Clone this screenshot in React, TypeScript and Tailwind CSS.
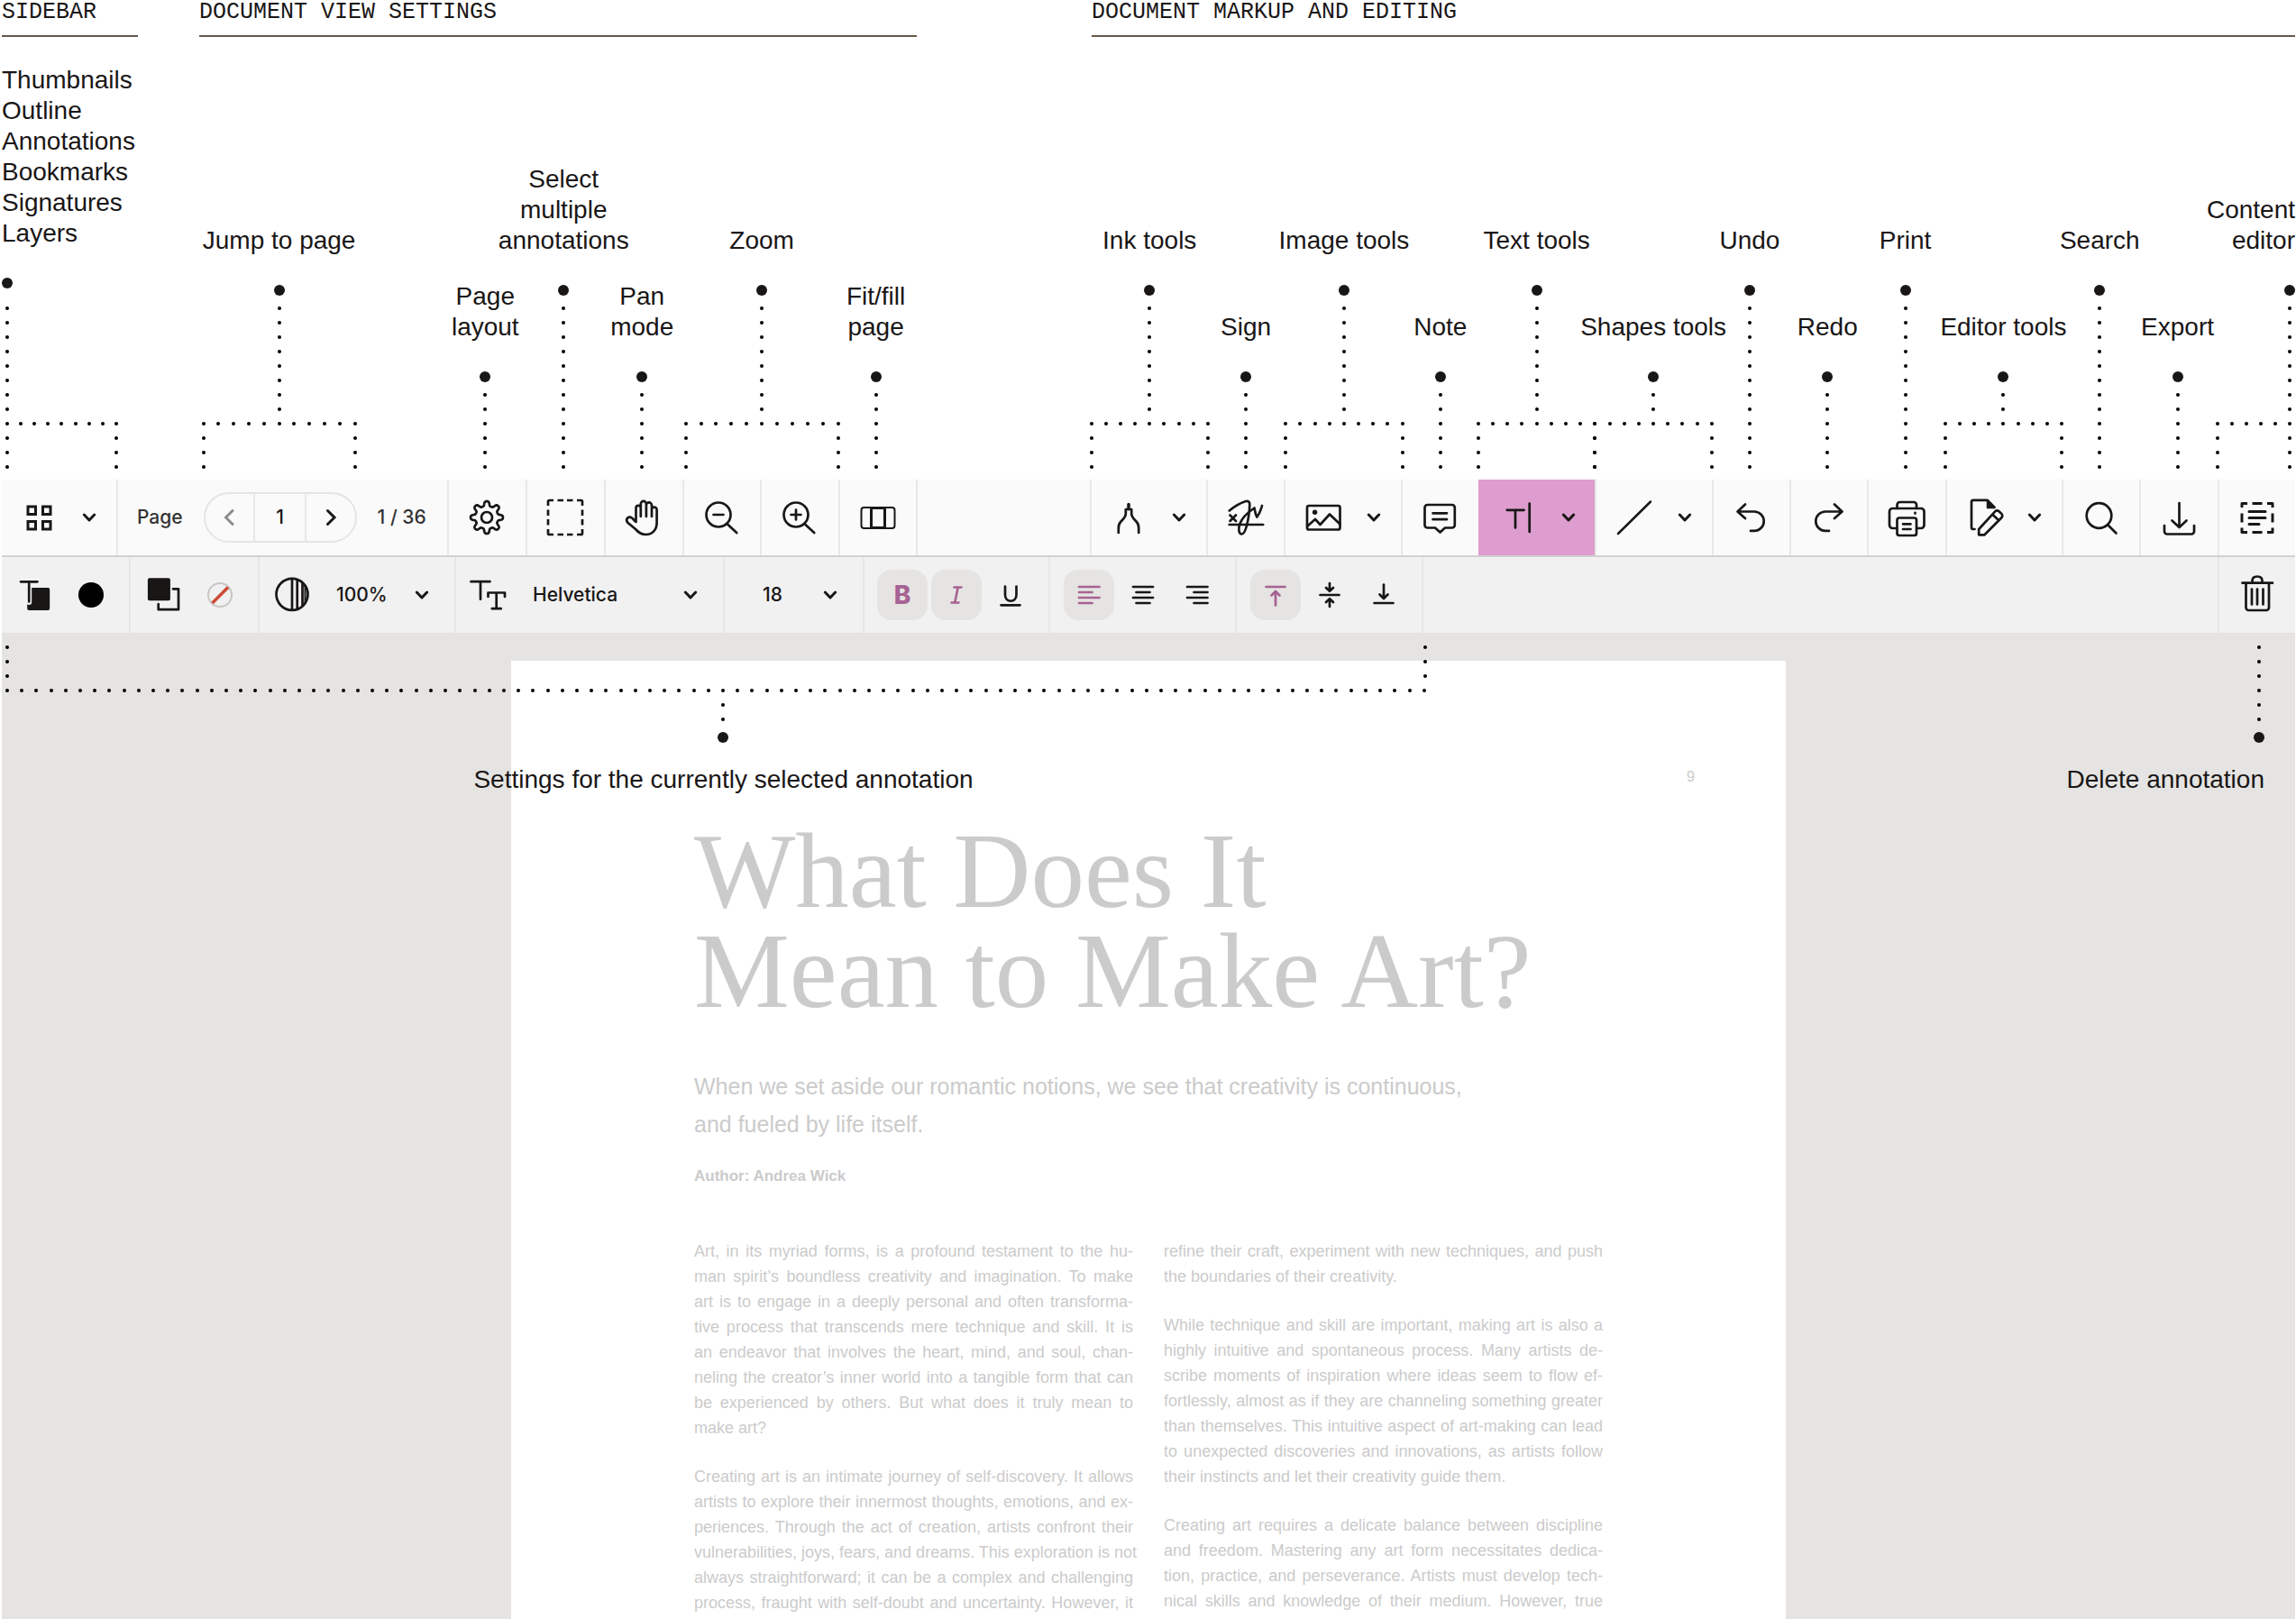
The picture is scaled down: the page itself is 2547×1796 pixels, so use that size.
import React from "react";

const ink = "#191616";

/* ---------- callouts ---------- */

function Dots({ count }: { count: number }) {
  return (
    <div className="flex w-3 flex-col items-center gap-3">
      {Array.from({ length: count }, (_, i) => (
        <span key={i} className="size-1 shrink-0 rounded-full bg-black" />
      ))}
    </div>
  );
}

function DotRow({ count }: { count: number }) {
  return (
    <div className="flex w-full justify-between">
      {Array.from({ length: count }, (_, i) => (
        <span key={i} className="size-1 shrink-0 rounded-full bg-black" />
      ))}
    </div>
  );
}

function Legs() {
  return (
    <div className="-mx-1 flex justify-between self-stretch">
      <Dots count={3} />
      <Dots count={3} />
    </div>
  );
}

const BigDot = () => <span className="size-3 shrink-0 rounded-full bg-[#191616]" />;

const labelText = "whitespace-nowrap text-[28px] leading-[34px] text-[#191616]";

type CalloutProps = {
  lines: string[];
  dots: number;
  bracket?: number;
  place?: string;
  align?: "start" | "center" | "end";
};

function Callout({ lines, dots, bracket, place = "-left-1 right-0", align = "center" }: CalloutProps) {
  const items = align === "start" ? "items-start" : align === "end" ? "items-end" : "items-center";
  const text = align === "start" ? "text-left" : align === "end" ? "text-right" : "text-center";
  return (
    <div className={`pointer-events-none absolute bottom-full flex flex-col gap-3 pb-3 ${items} ${place}`}>
      <div className={`mb-5 ${labelText} ${text}`}>
        {lines.map((line) => (
          <div key={line}>{line}</div>
        ))}
      </div>
      <BigDot />
      <Dots count={dots} />
      {bracket ? (
        <>
          <DotRow count={bracket} />
          <Legs />
        </>
      ) : null}
    </div>
  );
}

/* ---------- icons ---------- */

function Icon({ children, box = 48, width = 2.7 }: { children: React.ReactNode; box?: number; width?: number }) {
  return (
    <svg
      width={box}
      height={box}
      viewBox={`0 0 ${box} ${box}`}
      fill="none"
      stroke="currentColor"
      strokeWidth={width}
      strokeLinecap="round"
      strokeLinejoin="round"
      className="shrink-0"
      aria-hidden="true"
    >
      {children}
    </svg>
  );
}

const Chevron = () => (
  <svg width="24" height="24" viewBox="0 0 24 24" fill="none" stroke={ink} strokeWidth="3" strokeLinecap="round" strokeLinejoin="round" className="pointer-events-none shrink-0" aria-hidden="true">
    <path d="M6.300 9l5.700 6 5.700-6" />
  </svg>
);

const gearPath =
  Array.from({ length: 240 }, (_, i) => {
    const a = (i / 240) * Math.PI * 2;
    const r = 15.4 + 2.7 * Math.tanh(1.9 * Math.cos(8 * a) - 0.2);
    return `${i ? "L" : "M"}${(24 + r * Math.cos(a)).toFixed(2)} ${(24 + r * Math.sin(a)).toFixed(2)}`;
  }).join("") + "z";

const icons = {
  grid: (
    <Icon width={3}>
      <path strokeLinejoin="miter" d="M12 12h8.500v8.500h-8.500zM28.500 12h8.500v8.500h-8.500zM12 28.500h8.500v8.500h-8.500zM28.500 28.500h8.500v8.500h-8.500z" />
    </Icon>
  ),
  gear: (
    <Icon>
      <path d={gearPath} />
      <circle cx="24" cy="24" r="6" />
    </Icon>
  ),
  select: (
    <Icon width={2.7}>
      <g strokeLinecap="butt">
        <path d="M5 11V6.500A1.500 1.500 0 0 1 6.500 5H11M37 5h4.500A1.500 1.500 0 0 1 43 6.500V11M43 37v4.500a1.500 1.500 0 0 1-1.500 1.500H37M11 43H6.500A1.500 1.500 0 0 1 5 41.500V37" />
        <path d="M15.500 5H22M26 5h6.500M15.500 43H22M26 43h6.500M5 15.500V22M5 26v6.500M43 15.500V22M43 26v6.500" />
      </g>
    </Icon>
  ),
  hand: (
    <Icon>
      <path d="M15.500 29V13.500a2.650 2.650 0 0 1 5.300 0V23M20.800 14V9a3.050 3.050 0 0 1 6.100 0v14M26.900 10.500a3.050 3.050 0 0 1 6.100 0V23M33 15.500a2.800 2.800 0 0 1 5.600 0V30c0 7.500-5 13-12.100 13-5.500 0-8.500-2.500-11.500-6L6 29.500c-2.500-4 1.500-7.500 5-5l4.500 4.500" />
    </Icon>
  ),
  zoomOut: (
    <Icon>
      <circle cx="20" cy="21" r="13.500" />
      <path d="M30.500 32l9.700 9M14.500 21h11" />
    </Icon>
  ),
  zoomIn: (
    <Icon>
      <circle cx="20" cy="21" r="13.500" />
      <path d="M30.500 32l9.700 9M14.500 21h11M20 15.500v11" />
    </Icon>
  ),
  fit: (
    <Icon width={2}>
      <rect x="5.500" y="13" width="37" height="23" rx="3" />
      <path strokeWidth="3" strokeLinejoin="miter" d="M16.500 13.500h15v22h-15z" />
    </Icon>
  ),
  marker: (
    <Icon>
      <path d="M12.800 41v-5.500c0-3 .8-5 2.700-7 3-3.200 5.300-5 5.300-8.500v-5h6.400v5c0 3.500 2.300 5.300 5.300 8.500 1.900 2 2.700 4 2.700 7V41" />
      <path strokeWidth="3.500" d="M24 9.500v5" />
    </Icon>
  ),
  sign: (
    <Icon>
      <path d="M5.700 32h37.500M6.500 21.500l6.500 6.500M13 21.500L6.500 28" />
      <path d="M5.700 16.500C11 12 18 8 24 6c3.500-.8 4.500 1.500 4.300 4.500-.4 8-.8 13.500-3.300 22.500-1.500 6-3 9.500-5.500 9.500-3.500 0-3.800-6-2.300-11C20 23.500 26 18.500 33.500 13.500c.8 3.500 1 7 2.800 10 2.700-3.500 4.500-8 5.700-12.500" />
    </Icon>
  ),
  image: (
    <Icon>
      <rect x="6" y="11" width="36.500" height="26.500" rx="2" />
      <circle cx="14.600" cy="18.300" r="2.700" fill="currentColor" stroke="none" />
      <path d="M6.500 33.500l8.500-7.500 5.500 6L31 20.500l11.500 11" />
    </Icon>
  ),
  note: (
    <Icon>
      <path d="M9.500 10h27.300a3 3 0 0 1 3 3v19.500a3 3 0 0 1-3 3H29l-5.500 5-5.500-5h-8.500a3 3 0 0 1-3-3V13a3 3 0 0 1 3-3zM15.500 19.300h15.500M15.500 26.200h15.500" />
    </Icon>
  ),
  text: (
    <Icon>
      <path d="M11.800 15.800h18.800M21 15.800V35.500M36.700 8.500V40" />
    </Icon>
  ),
  line: (
    <Icon width={2.5}>
      <path d="M6 42L42 6.500" />
    </Icon>
  ),
  undo: (
    <Icon>
      <path d="M17 9.500L8.500 17.500l8.500 7.500M9 17.500H27a10.700 10.700 0 0 1 0 21.400h-4" />
    </Icon>
  ),
  redo: (
    <Icon>
      <path d="M30 9.500L38.500 17.500 30 25M38 17.500H20a10.700 10.700 0 0 0 0 21.400h4" />
    </Icon>
  ),
  print: (
    <Icon>
      <path d="M12.500 14V10a3 3 0 0 1 3-3H31a3 3 0 0 1 3 3v4" />
      <path d="M12 36H7.500a3.500 3.500 0 0 1-3.500-3.500v-15A3.500 3.500 0 0 1 7.500 14h31.500a3.500 3.500 0 0 1 3.500 3.500v15A3.500 3.500 0 0 1 39 36h-4.500" />
      <rect x="12.500" y="24.500" width="21.500" height="19.500" rx="2.500" />
      <path d="M19 31.300h8.500M19 37h8.500M32.500 18.800v.8" />
    </Icon>
  ),
  editor: (
    <Icon>
      <path d="M13.500 37h-1.500a2 2 0 0 1-2-2V6.800a2 2 0 0 1 2-2H27.500l8 8" />
      <path fill="currentColor" strokeWidth="1.500" d="M27.500 5v8.500h8z" />
      <path d="M18.200 43.300V37L36.200 17.300a3 3 0 0 1 4.300-.1l2.800 2.700a3 3 0 0 1 .1 4.300L24.500 43.300zM33.300 20.700l7 6.500" />
    </Icon>
  ),
  search: (
    <Icon>
      <circle cx="21.500" cy="22" r="13.800" />
      <path d="M31.500 32.500l9 9" />
    </Icon>
  ),
  download: (
    <Icon>
      <path d="M23.500 8v26.500M15.500 27.500l8 7.500 8-7.500M7 33v6.500a3 3 0 0 0 3 3h27a3 3 0 0 0 3-3V33" />
    </Icon>
  ),
  content: (
    <Icon width={3}>
      <g strokeLinecap="butt">
        <path d="M7 13V8.500h6M35 8.500h6V13M41 35.500V40.500h-6M13 40.500H7v-5M18.500 8.500h11M18.500 40.500h11M7 19.500v10M41 19.500v10" />
      </g>
      <path d="M15 17.500h18M15 24.500h18M15 31.500h11" />
    </Icon>
  ),
  textColor: (
    <Icon>
      <rect x="16.200" y="16" width="25" height="25" rx="2" fill="currentColor" stroke="none" />
      <path stroke="#f1f1f1" strokeWidth="6" strokeLinecap="round" d="M18.200 16v16" />
      <path d="M9 9.300h18.500M18.200 9.300V31.500" />
    </Icon>
  ),
  fillColor: (
    <Icon>
      <rect x="6.900" y="5.300" width="25" height="25" rx="2" fill="currentColor" stroke="none" />
      <path d="M35 17.300h6V40.200H18.700V34" />
    </Icon>
  ),
  opacity: (
    <Icon>
      <circle cx="24" cy="23.300" r="17.500" />
      <path d="M24 6v34.500M29.700 7.500v31.500M35.500 11.500v23.500" />
      <path strokeWidth="2" d="M38.500 14.500v17.500" />
    </Icon>
  ),
  fontSize: (
    <Icon>
      <path d="M4.500 9.200h21M15 9.200v19.500M23.500 26v-4.500h18.500v4.500M32.700 21.500v17.500M27.800 39.200h10" />
    </Icon>
  ),
  trash: (
    <Icon>
      <path d="M7.500 10.700h33.500M18.500 10V8.500c0-3 2-5 5.500-5s5.500 2 5.500 5V10M11.500 11v27a3 3 0 0 0 3 3h19.500a3 3 0 0 0 3-3V11M18 17.500v17M24 17.500v17M30.500 17.500v17" />
    </Icon>
  ),
  italic: (
    <Icon box={32} width={2.6}>
      <path d="M13.500 7.500h8M10.500 24.500h8M17.700 7.500l-3.500 17" />
    </Icon>
  ),
  underline: (
    <Icon box={32}>
      <path d="M10 6.500v9.500c0 9 12.500 9 12.500 0V6.500M5.500 27.300h21" />
    </Icon>
  ),
  alignLeft: (
    <Icon box={32}>
      <path d="M5 7h22.500M5 13h14.500M5 19h22.500M5 25h14.500" />
    </Icon>
  ),
  alignCenter: (
    <Icon box={32}>
      <path d="M5 7h22M8.500 13h15M5 19h22M8.500 25h15" />
    </Icon>
  ),
  alignRight: (
    <Icon box={32}>
      <path d="M5 7h22.500M12.500 13h15M5 19h22.500M12.500 25h15" />
    </Icon>
  ),
  top: (
    <Icon box={32}>
      <path d="M5.500 7h21M16 27.500V12M11.500 16.500L16 12l4.500 4.500" />
    </Icon>
  ),
  middle: (
    <Icon box={32}>
      <path d="M5.500 16h21M16 3v8M12 8l4 3.800L20 8M16 29v-8M12 24l4-3.800 4 3.800" />
    </Icon>
  ),
  bottom: (
    <Icon box={32}>
      <path d="M5.500 25h21M16 4.500V20M11.500 15.500L16 20l4.500-4.500" />
    </Icon>
  ),
};

/* ---------- main toolbar ---------- */

type ToolProps = {
  label: string;
  icon: React.ReactNode;
  menu?: boolean;
  active?: boolean;
  first?: boolean;
  children?: React.ReactNode;
};

function Tool({ label, icon, menu, active, first, children }: ToolProps) {
  const tone = active ? "border-[#dd9dce] bg-[#dd9dce]" : "border-[#e8e8e8]";
  return (
    <div className={`relative flex min-w-0 ${first ? "" : "border-l-2"} ${tone}`}>
      {children}
      <button type="button" aria-label={label} className="flex flex-1 items-center justify-center gap-5">
        {icon}
        {menu && <Chevron />}
      </button>
    </div>
  );
}

const wide = "-left-0.5 -right-1";
const snug = "-left-1 -right-0.5";

function PageNavigator() {
  return (
    <div className="flex items-center gap-[23px] border-l-2 border-[#e8e8e8] pl-[21px] text-[21px] font-medium text-[#333]">
      <label htmlFor="page">Page</label>
      <div className="relative">
        <Callout lines={["Jump to page"]} dots={8} bracket={11} place="-left-0.5 right-0 mb-[14px]" />
        <div className="flex h-14 w-[170px] divide-x-2 divide-[#e8e8e8] overflow-hidden rounded-full border-2 border-[#e5e5e5]">
          <button type="button" aria-label="Previous page" className="flex flex-1 items-center justify-center text-[#8b8b8b]">
            <svg width="24" height="24" viewBox="0 0 24 24" fill="none" stroke="currentColor" strokeWidth="3" strokeLinecap="round" aria-hidden="true">
              <path d="M16 4.500L8.500 12l7.500 7.500" />
            </svg>
          </button>
          <input id="page" defaultValue="1" className="w-[57px] bg-transparent text-center text-[#191616] outline-none" />
          <button type="button" aria-label="Next page" className="flex flex-1 items-center justify-center text-[#191616]">
            <svg width="24" height="24" viewBox="0 0 24 24" fill="none" stroke="currentColor" strokeWidth="3" strokeLinecap="round" aria-hidden="true">
              <path d="M8.500 4.500L16 12l-7.500 7.500" />
            </svg>
          </button>
        </div>
      </div>
      <span className="whitespace-nowrap">1 / 36</span>
    </div>
  );
}

function MainToolbar() {
  return (
    <div role="toolbar" aria-label="Document tools" className="grid h-[86px] grid-cols-[1014fr_193fr_1338fr] border-b-2 border-[#d2d2d1] bg-[#fafafa] text-[#191616]">
      <div className="grid grid-cols-[127fr_367fr_87fr_87fr_87fr_173fr_86fr]">
        <Tool label="Sidebar" icon={icons.grid} menu first>
          <Callout
            lines={["Thumbnails", "Outline", "Annotations", "Bookmarks", "Signatures", "Layers"]}
            dots={0}
            align="start"
            place="left-0 mb-[188px]"
          />
          <div className="pointer-events-none absolute bottom-full left-0 -right-1 flex flex-col gap-3 pb-3 pr-0.5">
            <Dots count={8} />
            <div className="pl-1">
              <DotRow count={9} />
            </div>
            <div className="-mr-1 flex justify-between">
              <Dots count={3} />
              <Dots count={3} />
            </div>
          </div>
        </Tool>
        <PageNavigator />
        <Tool label="Page layout" icon={icons.gear}>
          <Callout lines={["Page", "layout"]} dots={6} />
        </Tool>
        <Tool label="Select multiple annotations" icon={icons.select}>
          <Callout lines={["Select", "multiple", "annotations"]} dots={12} />
        </Tool>
        <Tool label="Pan mode" icon={icons.hand}>
          <Callout lines={["Pan", "mode"]} dots={6} />
        </Tool>
        <div className="relative grid grid-cols-2">
          <Callout lines={["Zoom"]} dots={8} bracket={11} place="left-0.5 -right-0.5" />
          <Tool label="Zoom out" icon={icons.zoomOut} />
          <Tool label="Zoom in" icon={icons.zoomIn} />
        </div>
        <Tool label="Fit or fill page" icon={icons.fit}>
          <Callout lines={["Fit/fill", "page"]} dots={6} />
        </Tool>
      </div>
      <div className="border-l-2 border-[#e8e8e8]" />
      <div className="grid grid-cols-[3fr_2fr_3fr_2fr_3fr_3fr_2fr_2fr_2fr_3fr_2fr_2fr_2fr]">
        <Tool label="Ink tools" icon={icons.marker} menu>
          <Callout lines={["Ink tools"]} dots={8} bracket={9} place={wide} />
        </Tool>
        <Tool label="Sign" icon={icons.sign}>
          <Callout lines={["Sign"]} dots={6} place="inset-x-0" />
        </Tool>
        <Tool label="Image tools" icon={icons.image} menu>
          <Callout lines={["Image tools"]} dots={8} bracket={9} place={wide} />
        </Tool>
        <Tool label="Note" icon={icons.note}>
          <Callout lines={["Note"]} dots={6} place="inset-x-0" />
        </Tool>
        <Tool label="Text tools" icon={icons.text} menu active>
          <Callout lines={["Text tools"]} dots={8} bracket={9} place={snug} />
        </Tool>
        <Tool label="Shapes tools" icon={icons.line} menu>
          <Callout lines={["Shapes tools"]} dots={2} bracket={9} place={snug} />
        </Tool>
        <Tool label="Undo" icon={icons.undo}>
          <Callout lines={["Undo"]} dots={12} />
        </Tool>
        <Tool label="Redo" icon={icons.redo}>
          <Callout lines={["Redo"]} dots={6} />
        </Tool>
        <Tool label="Print" icon={icons.print}>
          <Callout lines={["Print"]} dots={12} />
        </Tool>
        <Tool label="Editor tools" icon={icons.editor} menu>
          <Callout lines={["Editor tools"]} dots={2} bracket={9} place={snug} />
        </Tool>
        <Tool label="Search" icon={icons.search}>
          <Callout lines={["Search"]} dots={12} />
        </Tool>
        <Tool label="Export" icon={icons.download}>
          <Callout lines={["Export"]} dots={6} />
        </Tool>
        <Tool label="Content editor" icon={icons.content}>
          <Callout lines={["Content", "editor"]} dots={8} align="end" place="right-0 mb-16" />
          <div className="pointer-events-none absolute bottom-full -left-1 right-1 flex flex-col gap-3 pb-3">
            <DotRow count={6} />
            <Legs />
          </div>
        </Tool>
      </div>
    </div>
  );
}

/* ---------- annotation settings ---------- */

function Toggle({ label, on, children }: { label: string; on?: boolean; children: React.ReactNode }) {
  return (
    <button
      type="button"
      aria-label={label}
      aria-pressed={!!on}
      className={`flex size-14 items-center justify-center rounded-2xl ${on ? "bg-[#e5e4e2] text-[#a66292]" : "text-[#191616]"}`}
    >
      {children}
    </button>
  );
}

function Picker({ label, value, pad }: { label: string; value: string; pad: string }) {
  return (
    <div className="relative flex h-full min-w-0 flex-1 items-center">
      <select aria-label={label} defaultValue={value} className={`h-full w-full appearance-none bg-transparent text-[21px] font-medium text-[#191616] outline-none ${pad}`}>
        <option value={value}>{value}</option>
      </select>
      <span className="pointer-events-none absolute right-6">
        <Chevron />
      </span>
    </div>
  );
}

const group = "flex shrink-0 items-center border-r-2 border-[#e6e6e5]";

function SettingsToolbar() {
  return (
    <div role="toolbar" aria-label="Annotation settings" className="flex h-[84px] bg-[#f1f1f1] text-[#191616]">
      <div className="relative flex">
        <div className={`${group} w-[143px] gap-[25px] pl-3`}>
          {icons.textColor}
          <button type="button" aria-label="Text color" className="size-7 rounded-full bg-black" />
        </div>
        <div className={`${group} w-[143px] gap-[25px] pl-3`}>
          {icons.fillColor}
          <button type="button" aria-label="Background color: none" className="flex size-7 items-center justify-center">
            <svg width="28" height="28" viewBox="0 0 28 28" fill="none" aria-hidden="true">
              <circle cx="14" cy="14" r="13" stroke="#c9c8c7" strokeWidth="2" />
              <path d="M5.500 23L23 5.500" stroke="#cc4a36" strokeWidth="3.500" />
            </svg>
          </button>
        </div>
        <div className={`${group} w-[218px] pl-3`}>
          {icons.opacity}
          <Picker label="Opacity" value="100%" pad="pl-[25px]" />
        </div>
        <div className={`${group} w-[298px] pl-3`}>
          {icons.fontSize}
          <Picker label="Font" value="Helvetica" pad="pl-[25px]" />
        </div>
        <div className={`${group} w-[155px]`}>
          <Picker label="Font size" value="18" pad="pl-[42px]" />
        </div>
        <div className={`${group} w-[206px] justify-center gap-1`}>
          <Toggle label="Bold" on>
            <span className="text-[28px] leading-8 font-extrabold">B</span>
          </Toggle>
          <Toggle label="Italic" on>{icons.italic}</Toggle>
          <Toggle label="Underline">{icons.underline}</Toggle>
        </div>
        <div className={`${group} w-[207px] justify-center gap-1`}>
          <Toggle label="Align left" on>{icons.alignLeft}</Toggle>
          <Toggle label="Align center">{icons.alignCenter}</Toggle>
          <Toggle label="Align right">{icons.alignRight}</Toggle>
        </div>
        <div className={`${group} w-[207px] justify-center gap-1`}>
          <Toggle label="Align top" on>{icons.top}</Toggle>
          <Toggle label="Align middle">{icons.middle}</Toggle>
          <Toggle label="Align bottom">{icons.bottom}</Toggle>
        </div>
        <div className="pointer-events-none absolute top-full left-1 -right-1 flex flex-col items-center gap-3 pt-[14px]">
          <Legs />
          <DotRow count={98} />
          <div className="flex flex-col items-center gap-3 pl-4">
            <Dots count={2} />
            <BigDot />
            <div className={`mt-3 ${labelText}`}>Settings for the currently selected annotation</div>
          </div>
        </div>
      </div>
      <div className="flex-1" />
      <div className="relative flex w-[86px] border-l-2 border-[#e6e6e5]">
        <button type="button" aria-label="Delete annotation" className="flex flex-1 items-center justify-center">
          {icons.trash}
        </button>
        <div className="pointer-events-none absolute top-full right-[34px] flex flex-col items-end gap-3 pt-[14px]">
          <Dots count={6} />
          <BigDot />
          <div className={`mt-3 ${labelText}`}>Delete annotation</div>
        </div>
      </div>
    </div>
  );
}

/* ---------- document ---------- */

const leftColumn = [
  [
    "Art, in its myriad forms, is a profound testament to the hu-",
    "man spirit’s boundless creativity and imagination. To make",
    "art is to engage in a deeply personal and often transforma-",
    "tive process that transcends mere technique and skill. It is",
    "an endeavor that involves the heart, mind, and soul, chan-",
    "neling the creator’s inner world into a tangible form that can",
    "be experienced by others. But what does it truly mean to",
    "make art?",
  ],
  [
    "Creating art is an intimate journey of self-discovery. It allows",
    "artists to explore their innermost thoughts, emotions, and ex-",
    "periences. Through the act of creation, artists confront their",
    "vulnerabilities, joys, fears, and dreams. This exploration is not",
    "always straightforward; it can be a complex and challenging",
    "process, fraught with self-doubt and uncertainty. However, it",
  ],
];

const rightColumn = [
  ["refine their craft, experiment with new techniques, and push", "the boundaries of their creativity."],
  [
    "While technique and skill are important, making art is also a",
    "highly intuitive and spontaneous process. Many artists de-",
    "scribe moments of inspiration where ideas seem to flow ef-",
    "fortlessly, almost as if they are channeling something greater",
    "than themselves. This intuitive aspect of art-making can lead",
    "to unexpected discoveries and innovations, as artists follow",
    "their instincts and let their creativity guide them.",
  ],
  [
    "Creating art requires a delicate balance between discipline",
    "and freedom. Mastering any art form necessitates dedica-",
    "tion, practice, and perseverance. Artists must develop tech-",
    "nical skills and knowledge of their medium. However, true",
  ],
];

function Column({ paragraphs }: { paragraphs: string[][] }) {
  return (
    <div className="flex min-w-0 flex-1 flex-col gap-[26px]">
      {paragraphs.map((lines) => (
        <p key={lines[0]}>
          {lines.map((line) => {
            const ends = /[.?]$/.test(line);
            return (
              <span key={line} className={`block whitespace-nowrap ${ends ? "" : "[text-align-last:justify]"}`}>
                {line}
              </span>
            );
          })}
        </p>
      ))}
    </div>
  );
}

function DocumentPage() {
  return (
    <main className="flex flex-1 justify-center bg-[#e5e4e2] pt-[31px]">
      <article className="w-[1414px] bg-white pt-[117px] font-['Liberation_Sans',Arial,sans-serif] text-[#cbcbcb]">
        <div className="pr-[101px] text-right text-[16px] leading-6">9</div>
        <div className="px-[203px]">
          <h1 className="mt-[37px] font-['Liberation_Serif','Times_New_Roman',serif] text-[119px] leading-[111px] whitespace-nowrap">
            What Does It
            <br />
            Mean to Make Art?
          </h1>
          <p className="mt-[51px] text-[25px] leading-[42px]">
            When we set aside our romantic notions, we see that creativity is continuous,
            <br />
            and fueled by life itself.
          </p>
          <p className="mt-[25px] text-[17px] leading-6 font-bold">Author: Andrea Wick</p>
          <div className="mt-[57px] flex gap-[34px] text-[18px] leading-[28px]">
            <Column paragraphs={leftColumn} />
            <Column paragraphs={rightColumn} />
          </div>
        </div>
      </article>
    </main>
  );
}

const heading = "border-b-2 border-[#67594b] pb-3 font-['Liberation_Mono','Courier_New',monospace] text-[25px] leading-[27px] whitespace-nowrap text-[#191616]";

export default function App() {
  return (
    <div className="flex min-h-screen flex-col overflow-x-hidden bg-white pr-px pl-0.5 font-['Liberation_Sans',Arial,sans-serif]">
      <header className="grid grid-cols-[151fr_68fr_796fr_194fr_1335fr] pb-[491px]">
        <h2 className={heading}>SIDEBAR</h2>
        <h2 className={`col-start-3 ${heading}`}>DOCUMENT VIEW SETTINGS</h2>
        <h2 className={`col-start-5 ${heading}`}>DOCUMENT MARKUP AND EDITING</h2>
      </header>
      <div className="relative z-10 [&_button]:font-[Inter] [&_input]:font-[Inter] [&_label]:font-[Inter] [&_select]:font-[Inter] [&_span]:font-[Inter]">
        <MainToolbar />
        <SettingsToolbar />
      </div>
      <DocumentPage />
    </div>
  );
}
